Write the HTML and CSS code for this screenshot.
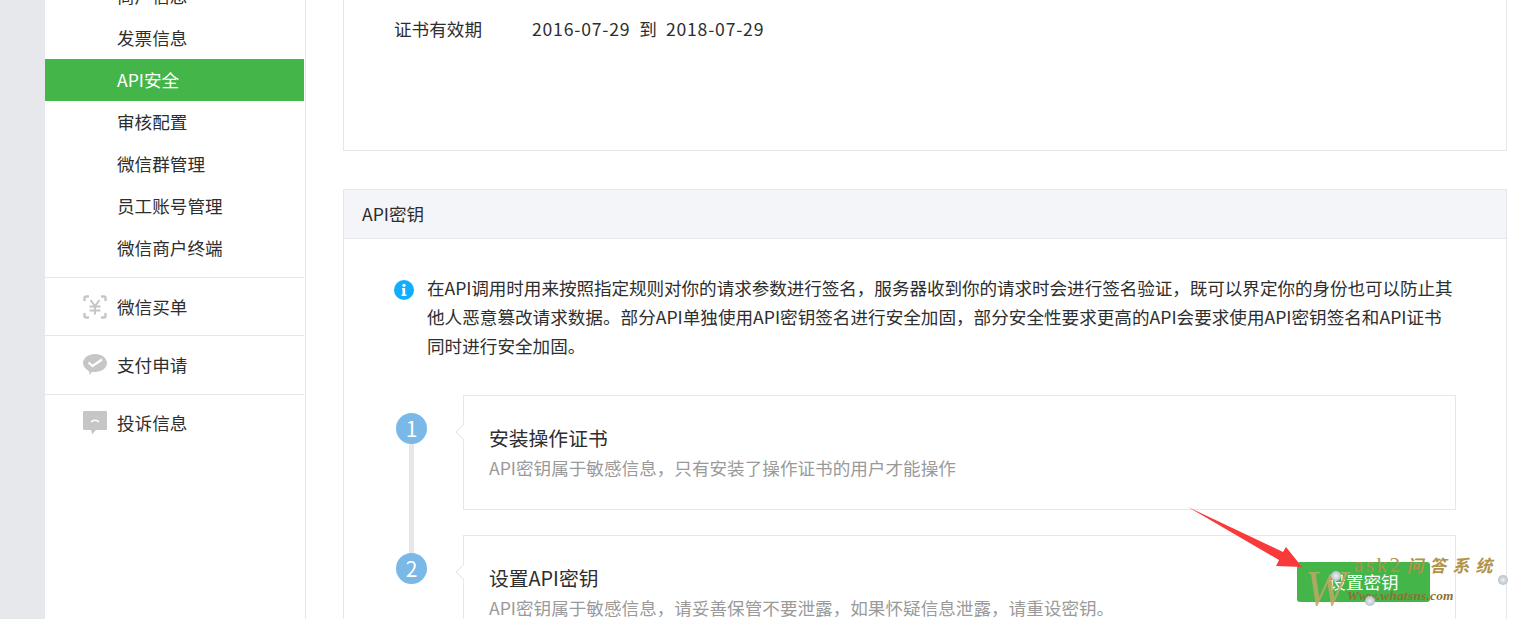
FILE: index.html
```html
<!DOCTYPE html>
<html lang="zh-CN">
<head>
<meta charset="utf-8">
<title>API安全</title>
<link rel="stylesheet" href="styles.css">
</head>
<body>
<div class="page">
  <div class="gutter"></div>
  <nav class="sidebar">
    <ul class="menu">
      <li class="item">商户信息</li>
      <li class="item">发票信息</li>
      <li class="item active">API安全</li>
      <li class="item">审核配置</li>
      <li class="item">微信群管理</li>
      <li class="item">员工账号管理</li>
      <li class="item">微信商户终端</li>
    </ul>
    <div class="group first">
      <svg class="gicon" viewBox="0 0 24 24" fill="none" stroke="#c6c6c6" stroke-width="2.400"><path d="M1.500 6V3a1.500 1.500 0 0 1 1.500-1.500h3M18 1.500h3A1.500 1.500 0 0 1 22.500 3v3M22.500 18v3a1.500 1.500 0 0 1-1.500 1.500h-3M6 22.500H3A1.500 1.500 0 0 1 1.500 21v-3"/><path d="M7.500 5 12 11l4.500-6M12 11v8.500M6.500 11.500h11M6.500 15.500h11" stroke-width="2"/></svg>
      <span>微信买单</span>
    </div>
    <div class="group second">
      <svg class="gicon" viewBox="0 0 24 24"><path fill="#c6c6c6" d="M12 2c6.500 0 12 3.900 12 9s-5.500 9-12 9c-1 0-2-.1-3-.3L6.500 23l-.3-3.600C2.500 17.200 0 14.300 0 11 0 5.900 5.500 2 12 2z"/><path fill="none" stroke="#fff" stroke-width="2.200" d="M5.500 10.500l4 3.500L19 7.500"/></svg>
      <span>支付申请</span>
    </div>
    <div class="group third">
      <svg class="gicon" viewBox="0 0 24 24"><path fill="#c6c6c6" d="M1 0h22a1 1 0 0 1 1 1v17a1 1 0 0 1-1 1H13l-4 4.500-1-4.500H1a1 1 0 0 1-1-1V1a1 1 0 0 1 1-1z"/><path fill="none" stroke="#fff" stroke-width="1.500" d="M8 11c2-2.500 6-2.500 8 0"/></svg>
      <span>投诉信息</span>
    </div>
  </nav>
  <main class="main">
    <section class="card cert">
      <div class="cert-row">
        <span class="cert-label">证书有效期</span>
        <span><span class="date">2016-07-29</span><span class="to">到</span><span class="date">2018-07-29</span></span>
      </div>
    </section>
    <section class="card keys">
      <h2 class="card-head">API密钥</h2>
      <div class="card-body">
        <div class="notice">
          <svg class="info" viewBox="0 0 20 20"><circle cx="10" cy="10" r="10" fill="#10aeff"/><circle cx="10" cy="5.300" r="1.600" fill="#fff"/><path d="M8 8h3.200v6.500H12.500V16h-5v-1.500h1V9.500H8z" fill="#fff"/></svg>
          <p class="notice-text"><span class="tight">在API调用时用来按照指定规则对你的请求参数进行签名，服务器收到你的请求时会进行签名验证，既可以界定你的身份也可以防止其</span><br>他人恶意篡改请求数据。部分API单独使用API密钥签名进行安全加固，部分安全性要求更高的API会要求使用API密钥签名和API证书<br>同时进行安全加固。</p>
        </div>
        <ol class="steps">
          <li class="step">
            <span class="num">1</span>
            <div class="step-card">
              <div>
                <h3 class="step-title">安装操作证书</h3>
                <p class="step-sub">API密钥属于敏感信息，只有安装了操作证书的用户才能操作</p>
              </div>
            </div>
          </li>
          <li class="step">
            <span class="num">2</span>
            <div class="step-card">
              <div>
                <h3 class="step-title">设置API密钥</h3>
                <p class="step-sub">API密钥属于敏感信息，请妥善保管不要泄露，如果怀疑信息泄露，请重设密钥。</p>
              </div>
              <a class="btn">设置密钥</a>
            </div>
          </li>
        </ol>
      </div>
    </section>
  </main>
</div>
<svg class="arrow" viewBox="0 0 130 70"><polygon points="2,2 97,47 100,42 116,62 90,61 93,55" fill="#f93a3a"/></svg>
<div class="mark">
  <span class="mark-title"><span class="mt-latin">ask2</span><span class="mt-cjk">问答系统</span></span>
  <span class="mark-w">W</span>
  <span class="mark-url">Www.whatsns.com</span>
  <i class="gem g1"></i><i class="gem g2"></i><i class="gem g3"></i>
</div>
</body>
</html>
```
FILE: styles.css
```css
* { box-sizing: border-box; }
html, body { margin: 0; height: 619px; overflow: hidden; background: #fff; }
body { font-family: "Noto Sans CJK SC", "Liberation Sans", sans-serif; font-size: 17.6px; color: #2e2e2e; position: relative; }
.page { display: flex; height: 619px; overflow: hidden; }
.gutter { width: 44px; flex: none; background: #e7e8eb; }
.sidebar { width: 262px; flex: none; border-right: 1px solid #e7e7eb; border-left: 1px solid #e7e7eb; padding-right: 1px; }
.menu { list-style: none; margin: -25px 0 0; padding: 0; }
.item { height: 42px; line-height: 42px; padding-left: 72px; white-space: nowrap; }
.active { background: #44b549; color: #fff; }
.group { display: flex; align-items: center; gap: 10px; padding-left: 38px; border-top: 1px solid #e7e7eb; }
.group.first { margin-top: 8px; height: 58px; }
.group.second { height: 59px; padding-bottom: 2px; }
.group.third { height: 58px; padding-bottom: 2px; }
.gicon { width: 24px; height: 24px; flex: none; }
.main { flex: 1; padding: 0 16px 0 37px; min-width: 0; }
.card { border: 1px solid #e7e7eb; }
.cert { height: 151px; border-top: 0; padding: 16px 0 0 50px; }
.cert-row { display: flex; gap: 50px; line-height: 26px; }
.date { letter-spacing: .8px; }
.to { margin: 0 9px; }
.keys { margin-top: 38px; height: 600px; }
.card-head { margin: 0; height: 49px; line-height: 47px; padding-left: 18px; font-size: 17.6px; font-weight: 400; background: #f4f5f9; border-bottom: 1px solid #e7e7eb; }
.card-body { padding: 34px 50px 0 50px; }
.notice { display: flex; gap: 13px; }
.info { width: 20px; height: 20px; flex: none; margin-top: 7px; }
.notice-text { margin: 0; line-height: 29px; white-space: nowrap; }
.tight { letter-spacing: -.07px; }
.steps { list-style: none; margin: 35px 0 0; padding: 0; }
.step { display: flex; gap: 36px; position: relative; height: 140px; }
.step:first-child::after { content: ""; position: absolute; left: 15px; top: 40px; width: 5px; height: 125px; background: #e7e7eb; }
.num { width: 31px; height: 31px; margin: 18px 0 0 2px; flex: none; border-radius: 50%; background: #7ab8e8; color: #fff; font-size: 21px; text-align: center; line-height: 31px; position: relative; z-index: 1; }
.step-card { flex: 1; height: 115px; border: 1px solid #e7e7eb; position: relative; display: flex; justify-content: space-between; align-items: flex-start; padding: 27px 25px 0; background: #fff; }
.step-card::before { content: ""; position: absolute; left: -6px; top: 30px; width: 11px; height: 11px; background: #fff; border-left: 1px solid #e7e7eb; border-bottom: 1px solid #e7e7eb; transform: rotate(45deg); }
.step-title { margin: 0; font-size: 19.8px; font-weight: 400; line-height: 30px; }
.step-sub { margin: 0; color: #9a9a9a; line-height: 30px; white-space: nowrap; }
.btn { width: 133px; height: 40px; line-height: 40px; background: #44b549; color: #fff; text-align: center; border-radius: 3px; flex: none; margin-top: -1px; }
.arrow { position: absolute; left: 1186px; top: 505px; width: 130px; height: 70px; }
.mark { position: absolute; left: 1300px; top: 550px; width: 223px; height: 69px; }
.mark-title, .mark-url, .mark-w { position: absolute; white-space: nowrap; }
.mark-title { left: 54px; top: 3px; line-height: 24px; color: #b0924a; display: flex; align-items: center; }
.mt-latin { font-family: "Liberation Serif", serif; font-size: 21px; letter-spacing: 2.500px; margin-right: 5px; }
.mt-cjk { font-size: 17px; font-weight: 700; letter-spacing: 6px; transform: skewX(-12deg); margin-right: -6px; }
.mark-w { left: 5px; top: 15px; font-family: "Liberation Serif", serif; font-style: italic; font-size: 50px; line-height: 46px; color: #c0a868; opacity: .85; }
.mark-url { left: 47px; top: 37px; font-family: "Liberation Serif", serif; font-style: italic; font-weight: 700; font-size: 13.400px; line-height: 18px; color: #8a7234; letter-spacing: .2px; }
.gem { position: absolute; width: 10px; height: 10px; border-radius: 50%; background: radial-gradient(circle, #eef1f4 0, #b8c0c8 70%, #98a2ab 100%); }
.g1 { left: 31px; top: 21px; }
.g2 { left: 65px; top: 46px; }
.g3 { left: 198px; top: 25px; }
```
